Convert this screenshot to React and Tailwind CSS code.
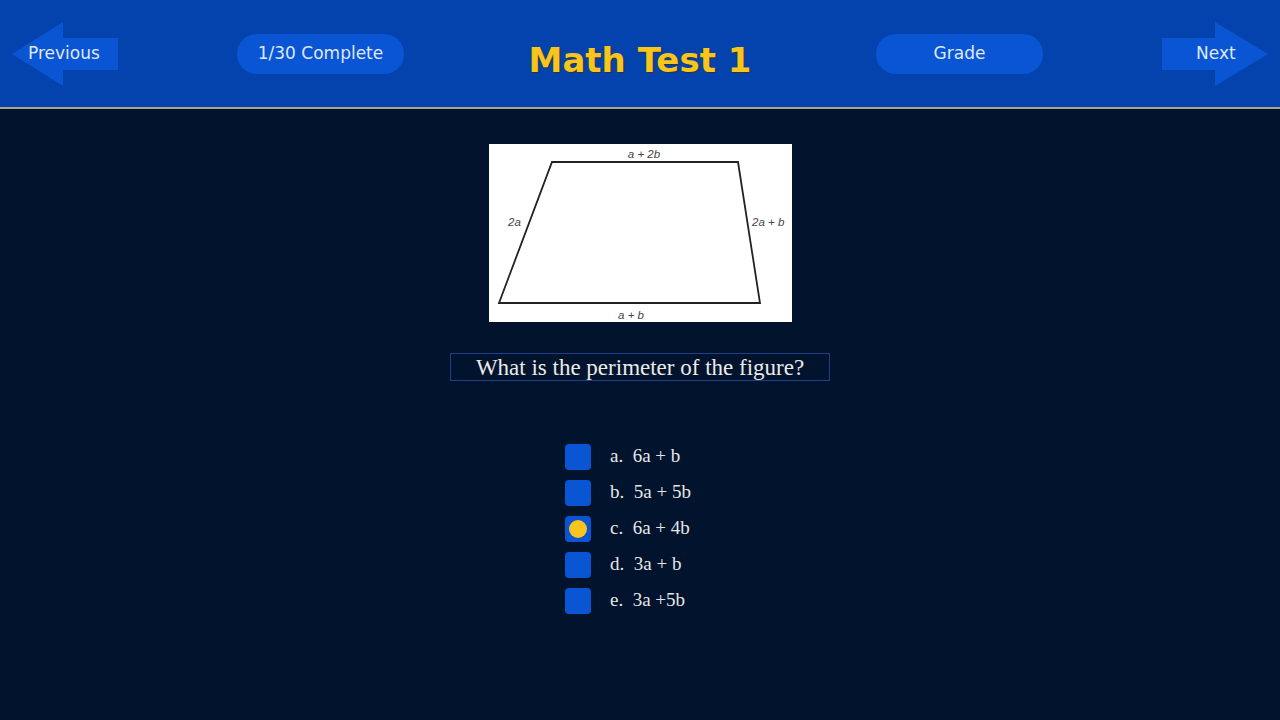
import React, { useState } from 'react';

const OPTIONS = [
    { key: 'a', text: '6a + b' },
    { key: 'b', text: '5a + 5b' },
    { key: 'c', text: '6a + 4b' },
    { key: 'd', text: '3a + b' },
    { key: 'e', text: '3a +5b' }
];

const ArrowButton = ({ dir, label }) => {
    const left = dir === 'left';
    return (
        <button className="relative w-[106px] h-[64px] flex items-center">
            <svg className="absolute inset-0" width="106" height="64" viewBox="0 0 106 64">
                {left ? (
                    <polygon points="0,32 51,0 51,16 106,16 106,48 51,48 51,64" fill="#0a55d4" />
                ) : (
                    <polygon points="106,32 53,0 53,16 0,16 0,48 53,48 53,64" fill="#0a55d4" />
                )}
            </svg>
            <span
                className={`relative z-10 text-[17px] text-[#dfe8fb] ${left ? 'ml-[16px]' : 'ml-[34px]'}`}
                style={{ fontFamily: '"DejaVu Sans", sans-serif' }}
            >
                {label}
            </span>
        </button>
    );
};

const Figure = () => (
    <div className="w-[303px] h-[178px] bg-white">
        <svg width="303" height="178" viewBox="0 0 303 178">
            <polygon points="63,18 249,18 271,159 10,159" fill="none" stroke="#222" strokeWidth="1.8" />
            <g fill="#444" fontSize="11.5" fontStyle="italic" fontFamily='"Liberation Sans", Arial, sans-serif'>
                <text x="155" y="14" textAnchor="middle">a + 2b</text>
                <text x="19" y="82">2a</text>
                <text x="263" y="82">2a + b</text>
                <text x="142" y="175" textAnchor="middle">a + b</text>
            </g>
        </svg>
    </div>
);

export default function App() {
    const [selected, setSelected] = useState('c');

    return (
        <div className="w-[1280px] h-[720px] bg-[#02132e] overflow-hidden">
            <header className="h-[109px] bg-[#0443ae] border-b-2 border-[#a9a58a] flex items-center justify-between pl-[12px] pr-[12px]">
                <ArrowButton dir="left" label="Previous" />
                <div
                    className="ml-[119px] w-[167px] h-[40px] rounded-full bg-[#0a55d4] flex items-center justify-center text-[17px] text-[#dfe8fb]"
                    style={{ fontFamily: '"DejaVu Sans", sans-serif' }}
                >
                    1/30 Complete
                </div>
                <h1
                    className="flex-1 text-center text-[34px] font-bold text-[#f7c51d] mt-[14px] [text-shadow:1px_1px_1px_#333]"
                    style={{ fontFamily: '"DejaVu Sans", sans-serif' }}
                >
                    Math Test 1
                </h1>
                <div
                    className="mr-[119px] w-[167px] h-[40px] rounded-full bg-[#0a55d4] flex items-center justify-center text-[17px] text-[#dfe8fb]"
                    style={{ fontFamily: '"DejaVu Sans", sans-serif' }}
                >
                    Grade
                </div>
                <ArrowButton dir="right" label="Next" />
            </header>

            <main className="flex flex-col items-center pt-[35px]">
                <Figure />
                <div
                    className="mt-[31px] w-[380px] h-[28px] border border-[#1d3f8a] flex items-center justify-center text-[23px] leading-none text-[#ebebeb]"
                    style={{ fontFamily: '"Liberation Serif", serif' }}
                >
                    What is the perimeter of the figure?
                </div>

                <ul className="mt-[63px] flex flex-col gap-[10px] ml-[15px]">
                    {OPTIONS.map((o) => (
                        <li key={o.key} className="flex items-center h-[26px]">
                            <button
                                onClick={() => setSelected(o.key)}
                                className="w-[26px] h-[26px] rounded-[4px] bg-[#0a55d4] flex items-center justify-center"
                            >
                                {selected === o.key && <span className="w-[18px] h-[18px] rounded-full bg-[#f7c51d]" />}
                            </button>
                            <span
                                className="ml-[19px] mb-[2px] text-[19px] text-[#e6e6e6] w-[120px] whitespace-pre"
                                style={{ fontFamily: '"Liberation Serif", serif' }}
                            >
                                {`${o.key}.  ${o.text}`}
                            </span>
                        </li>
                    ))}
                </ul>
            </main>
        </div>
    );
}
